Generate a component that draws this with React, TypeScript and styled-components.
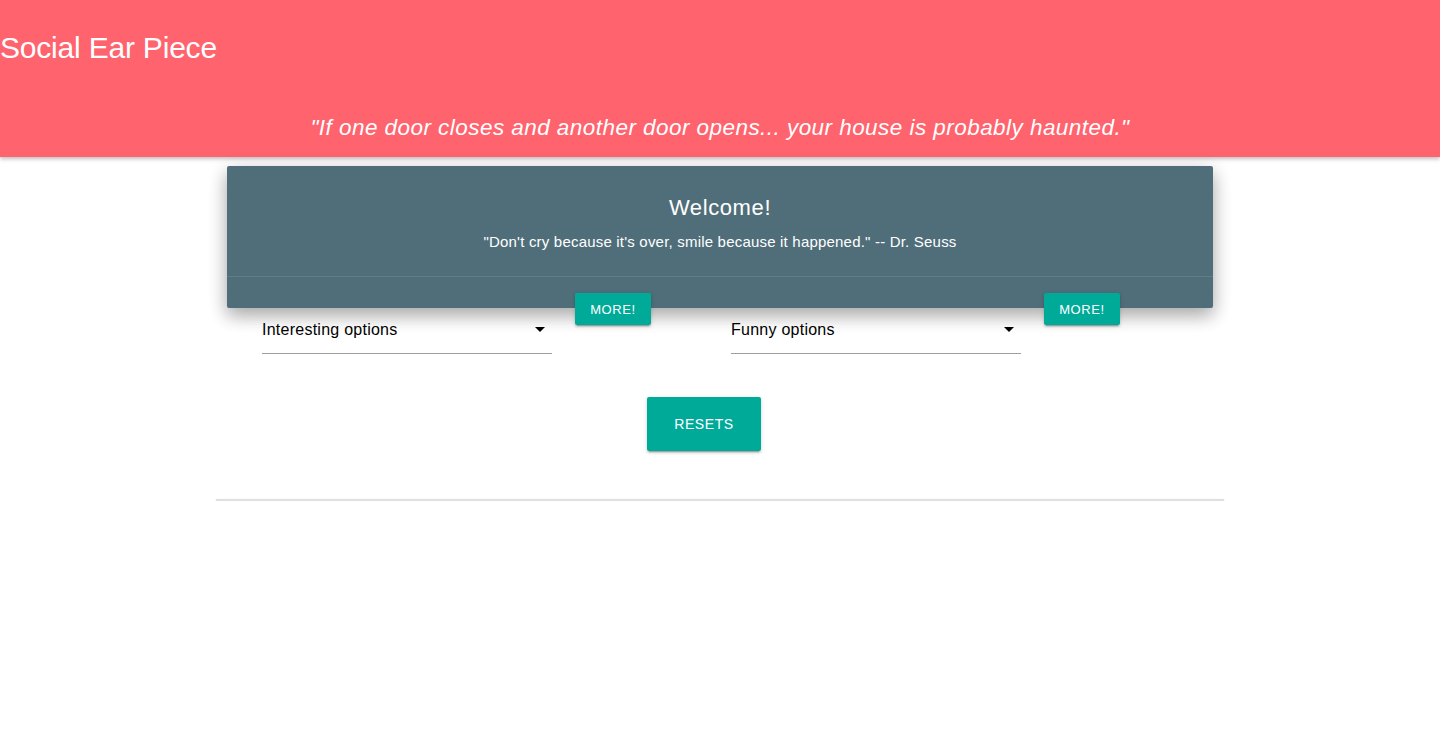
import styled, { createGlobalStyle } from 'styled-components';

const GlobalStyle = createGlobalStyle`
  html, body {
    margin: 0;
    padding: 0;
    background: #fff;
    font-family: "Liberation Sans", Arial, sans-serif;
  }
`;

const Header = styled.header`
  background: #ff636e;
  height: 157px;
  box-shadow: 0 2px 4px rgba(0, 0, 0, 0.25);
  display: flex;
  flex-direction: column;
  justify-content: space-between;
  color: #fff;
`;

const Brand = styled.h1`
  margin: 30px 0 0;
  font-size: 30px;
  font-weight: 400;
  line-height: 36px;
  letter-spacing: -0.2px;
`;

const Motto = styled.p`
  margin: 0 0 15px;
  text-align: center;
  font-style: italic;
  font-size: 22.5px;
  line-height: 28px;
  letter-spacing: 0.45px;
`;

const Container = styled.main`
  width: 1008px;
  margin: 0 auto;
`;

const Card = styled.section`
  margin: 9px 11px 0;
  background: #4f6e7a;
  color: #fff;
  border-radius: 2px;
  box-shadow: 0 8px 17px rgba(0, 0, 0, 0.2), 0 6px 20px rgba(0, 0, 0, 0.19);
`;

const CardBody = styled.div`
  padding: 28px 24px 24px;
  text-align: center;
  border-bottom: 1px solid rgba(255, 255, 255, 0.1);
`;

const CardTitle = styled.h2`
  margin: 0 0 9px;
  font-size: 22px;
  font-weight: 400;
  line-height: 28px;
  letter-spacing: 0.6px;
`;

const CardQuote = styled.p`
  margin: 0;
  font-size: 15px;
  line-height: 21px;
  letter-spacing: 0.2px;
`;

const CardAction = styled.div`
  height: 31px;
`;

const Filters = styled.div`
  display: flex;
  gap: 80px;
  padding-left: 46px;
  margin-top: -15px;
`;

const FilterGroup = styled.div`
  display: flex;
  align-items: flex-start;
  gap: 23px;
`;

const Select = styled.div`
  width: 290px;
  height: 47px;
  margin-top: 13px;
  border-bottom: 1px solid #9e9e9e;
  display: flex;
  align-items: center;
  justify-content: space-between;
  font-size: 16px;
  letter-spacing: 0.25px;
  color: #000;
`;

const Caret = styled.span`
  width: 0;
  height: 0;
  margin-right: 7px;
  border-left: 5px solid transparent;
  border-right: 5px solid transparent;
  border-top: 5px solid #000;
`;

const Button = styled.button<{ $large?: boolean }>`
  position: relative;
  z-index: 1;
  border: none;
  border-radius: 2px;
  background: #00aa99;
  color: #fff;
  font-family: "Liberation Sans", Arial, sans-serif;
  text-transform: uppercase;
  letter-spacing: 0.6px;
  cursor: pointer;
  box-shadow: 0 2px 2px rgba(0, 0, 0, 0.14), 0 1px 5px rgba(0, 0, 0, 0.12),
    0 3px 1px -2px rgba(0, 0, 0, 0.2);
  width: ${(p) => (p.$large ? '114px' : '76px')};
  height: ${(p) => (p.$large ? '54px' : '32px')};
  font-size: ${(p) => (p.$large ? '14px' : '13px')};
  padding: 0;
`;

const ResetRow = styled.div`
  display: flex;
  justify-content: center;
  padding-right: 32px;
  margin-top: 43px;
`;

const Divider = styled.hr`
  margin: 48px 0 0;
  border: none;
  height: 2px;
  background: #e0e0e0;
  box-shadow: 0 1px 3px rgba(0, 0, 0, 0.12);
`;

const filters = ['Interesting options', 'Funny options'];

export default function App() {
  return (
    <>
      <GlobalStyle />
      <Header>
        <Brand>Social Ear Piece</Brand>
        <Motto>
          "If one door closes and another door opens... your house is probably haunted."
        </Motto>
      </Header>
      <Container>
        <Card>
          <CardBody>
            <CardTitle>Welcome!</CardTitle>
            <CardQuote>
              "Don't cry because it's over, smile because it happened." -- Dr. Seuss
            </CardQuote>
          </CardBody>
          <CardAction />
        </Card>
        <Filters>
          {filters.map((label) => (
            <FilterGroup key={label}>
              <Select>
                {label}
                <Caret />
              </Select>
              <Button>More!</Button>
            </FilterGroup>
          ))}
        </Filters>
        <ResetRow>
          <Button $large>Resets</Button>
        </ResetRow>
        <Divider />
      </Container>
    </>
  );
}
